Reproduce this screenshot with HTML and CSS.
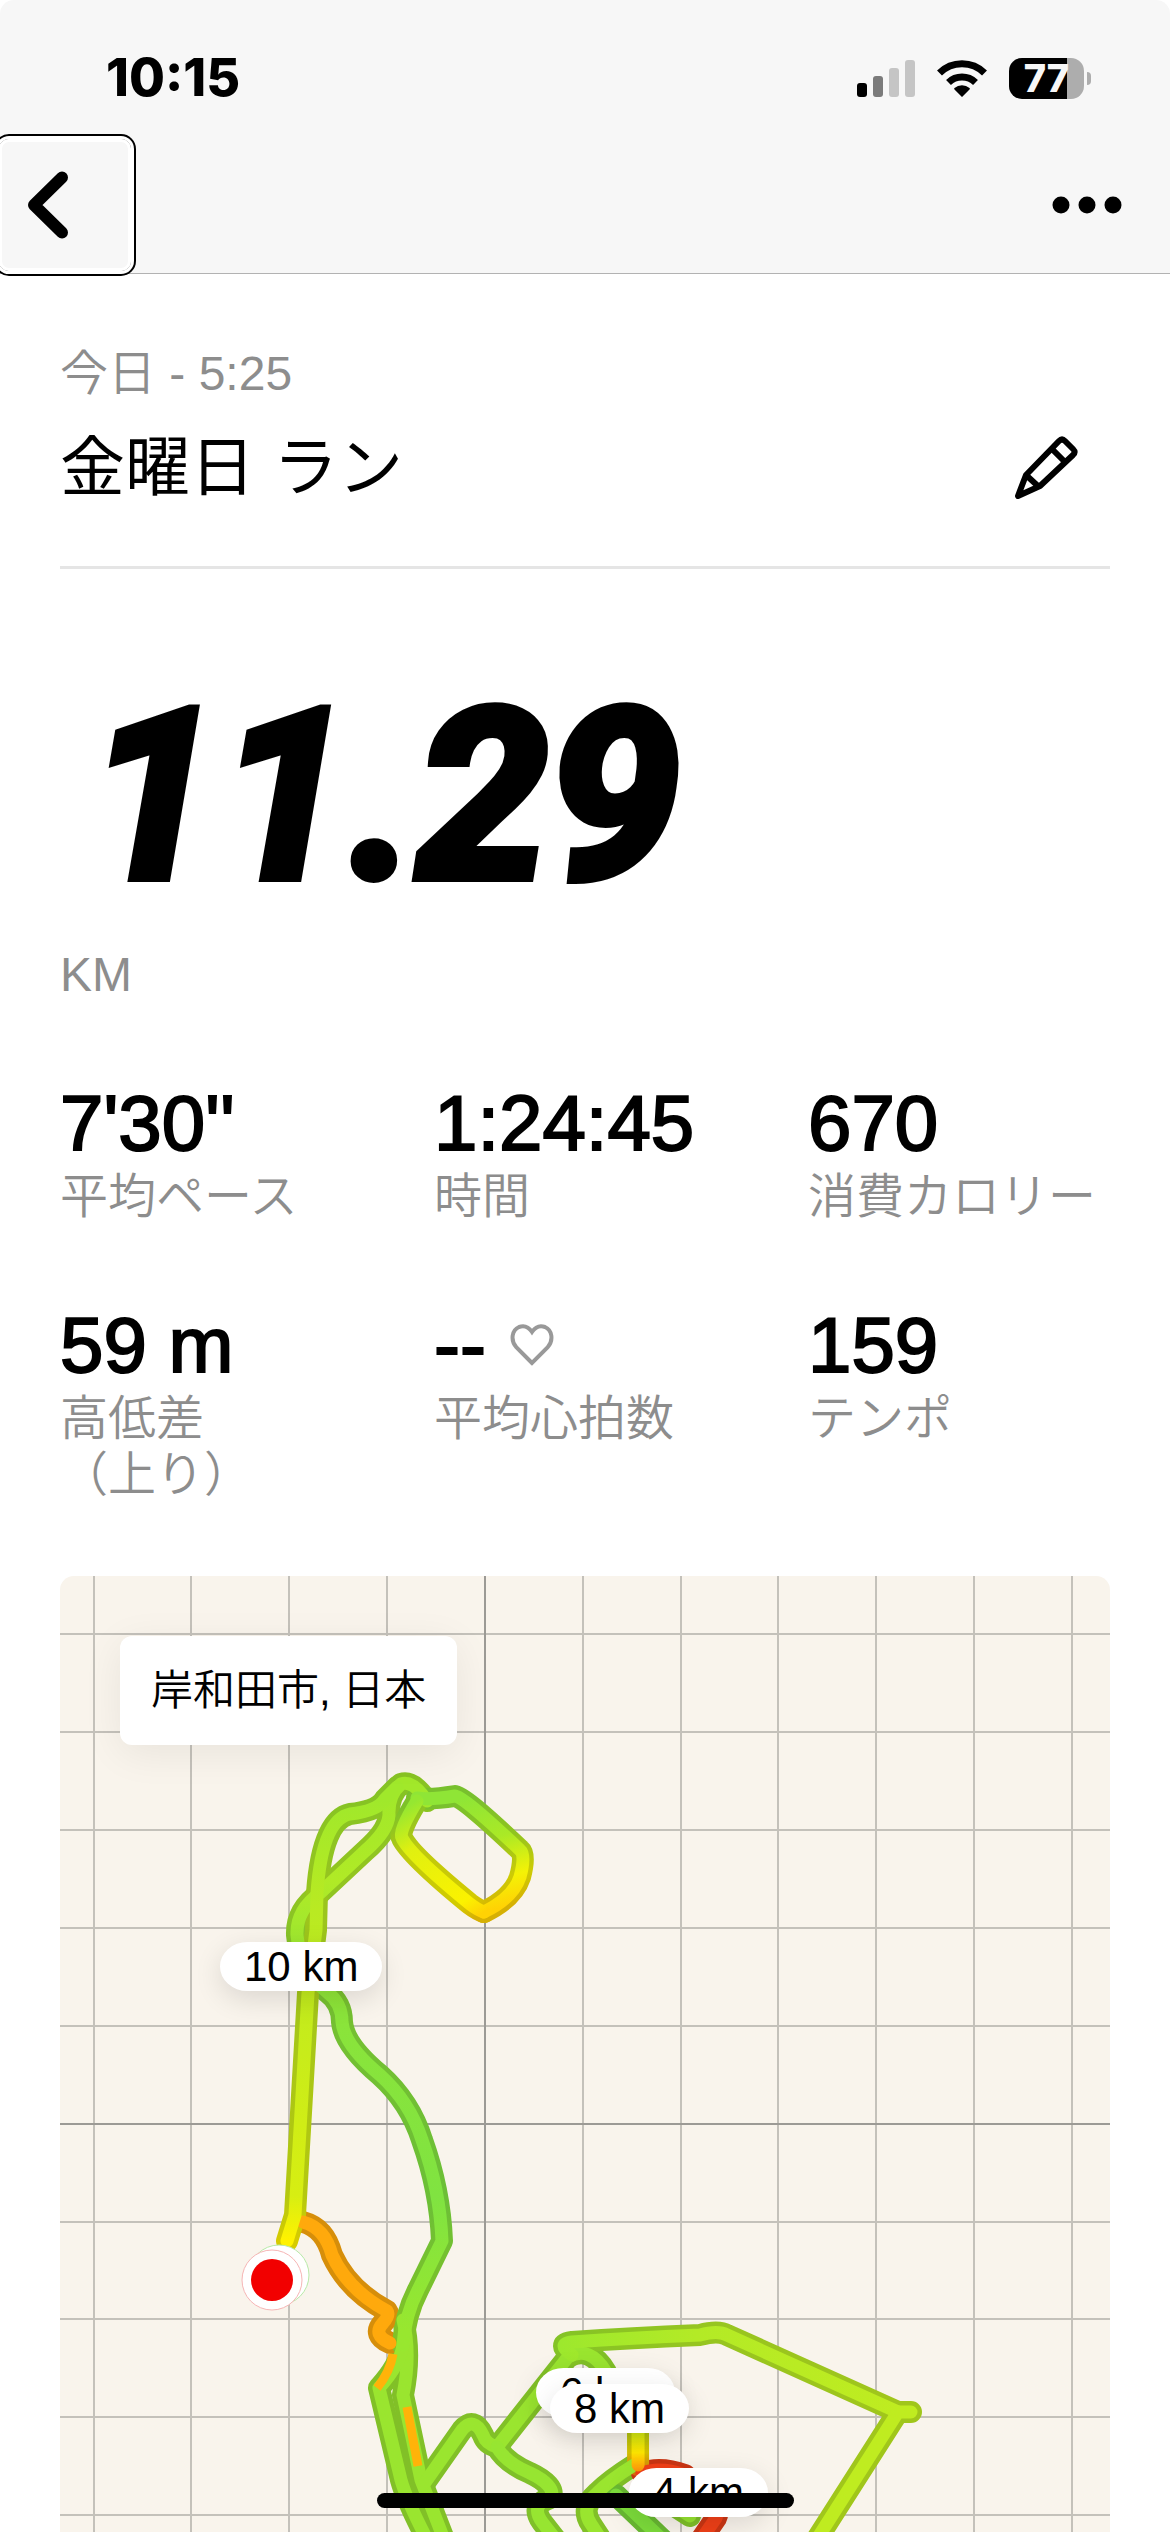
FILE: index.html
```html
<!DOCTYPE html>
<html lang="ja">
<head>
<meta charset="utf-8">
<meta name="viewport" content="width=device-width, initial-scale=1">
<title>金曜日 ラン</title>
<link rel="stylesheet" href="styles.css">
</head>
<body>
<header class="header">
  <div class="status">
    <span class="clock">10:15</span>
    <div class="status-icons">
      <svg class="signal" viewBox="0 0 58 37" aria-hidden="true">
        <rect x="0" y="23" width="10" height="14" rx="3"/>
        <rect x="16" y="16" width="10" height="21" rx="3" fill="#7b7b7b"/>
        <rect x="32" y="8" width="10" height="29" rx="3" fill="#c5c5c5"/>
        <rect x="48" y="0" width="10" height="37" rx="3" fill="#c5c5c5"/>
      </svg>
      <svg class="wifi" viewBox="0 0 50 37" aria-hidden="true">
        <path d="M25 37 17.500 29.500a1 1 0 0 1 0-1.500a11.500 11.500 0 0 1 15 0a1 1 0 0 1 0 1.500Z"/>
        <path d="M11.500 22.500a19.500 19.500 0 0 1 27 0" fill="none" stroke="#000" stroke-width="7"/>
        <path d="M2.500 13a32 32 0 0 1 45 0" fill="none" stroke="#000" stroke-width="7"/>
      </svg>
      <div class="battery"><span class="battery-level">77</span></div>
    </div>
  </div>
  <nav class="nav">
    <button class="back" type="button" aria-label="戻る">
      <svg class="chevron" viewBox="0 0 40 68" aria-hidden="true"><path d="M34 6.500 6 34l28 27.500" fill="none" stroke="#000" stroke-width="12" stroke-linecap="round" stroke-linejoin="round"/></svg>
    </button>
    <button class="more" type="button" aria-label="その他">
      <svg class="dots" viewBox="0 0 70 18" aria-hidden="true"><circle cx="9" cy="9" r="8.500"/><circle cx="35" cy="9" r="8.500"/><circle cx="61" cy="9" r="8.500"/></svg>
    </button>
  </nav>
</header>
<main class="main">
  <section class="heading">
    <div>
      <p class="label">今日 - 5:25</p>
      <h1 class="title">金曜日 ラン</h1>
    </div>
    <button class="edit" type="button" aria-label="編集">
      <svg class="pencil" viewBox="0 0 64 64" aria-hidden="true" fill="none" stroke="#000" stroke-width="6" stroke-linejoin="round"><path d="M4 60 12 39 45 5q3-3 6 0l8 8q3 3 0 6L26 50Z"/><path d="M38 13 51 26M12 39l13 12"/></svg>
    </button>
  </section>
  <section class="distance">
    <p class="distance-value">11.29</p>
    <p class="label">KM</p>
  </section>
  <dl class="stats">
    <div class="stat"><dt class="label">平均ペース</dt><dd class="value">7'30''</dd></div>
    <div class="stat"><dt class="label">時間</dt><dd class="value">1:24:45</dd></div>
    <div class="stat"><dt class="label">消費カロリー</dt><dd class="value">670</dd></div>
    <div class="stat"><dt class="label">高低差<br>（上り）</dt><dd class="value">59 m</dd></div>
    <div class="stat"><dt class="label">平均心拍数</dt><dd class="value">--<svg class="heart" viewBox="0 0 44 42" aria-hidden="true"><path d="M22 39 6.500 23.500C0 16 2 6 9 3C14.500 1 19 3.500 22 8C25 3.500 29.500 1 35 3C42 6 44 16 37.500 23.500Z" fill="none" stroke="#999" stroke-width="4"/></svg></dd></div>
    <div class="stat"><dt class="label">テンポ</dt><dd class="value">159</dd></div>
  </dl>
  <section class="map" aria-label="ルート">
    <svg class="map-canvas" viewBox="60 1576 1050 956" preserveAspectRatio="xMidYMin slice" aria-hidden="true">
      <defs>
        <linearGradient id="west" gradientUnits="userSpaceOnUse" x1="0" y1="1800" x2="0" y2="2240"><stop offset="0" stop-color="#a0e82b"/><stop offset=".25" stop-color="#b9ea22"/><stop offset=".9" stop-color="#d7ee12"/><stop offset="1" stop-color="#fff200"/></linearGradient>
        <linearGradient id="loop" gradientUnits="userSpaceOnUse" x1="455" y1="1800" x2="484" y2="1912"><stop offset="0" stop-color="#8fe536"/><stop offset=".4" stop-color="#aae926"/><stop offset=".75" stop-color="#f4f206"/><stop offset="1" stop-color="#ffd204"/></linearGradient>
        <linearGradient id="inner" gradientUnits="userSpaceOnUse" x1="417" y1="1800" x2="484" y2="1912"><stop offset="0" stop-color="#95e731"/><stop offset=".3" stop-color="#e0f010"/><stop offset=".85" stop-color="#fbf200"/><stop offset="1" stop-color="#ffd204"/></linearGradient>
        <linearGradient id="east" gradientUnits="userSpaceOnUse" x1="0" y1="1800" x2="0" y2="2330"><stop offset="0" stop-color="#a2e82a"/><stop offset=".15" stop-color="#b0ea26"/><stop offset=".4" stop-color="#8be43a"/><stop offset=".75" stop-color="#80e341"/><stop offset="1" stop-color="#98e72f"/></linearGradient>
        <linearGradient id="ridge" gradientUnits="userSpaceOnUse" x1="560" y1="0" x2="900" y2="0"><stop offset="0" stop-color="#9de82d"/><stop offset=".4" stop-color="#b3ea26"/><stop offset="1" stop-color="#bfec20"/></linearGradient>
        <linearGradient id="heat" gradientUnits="userSpaceOnUse" x1="0" y1="2425" x2="0" y2="2480"><stop offset="0" stop-color="#c3ea1a"/><stop offset=".5" stop-color="#ffe800"/><stop offset="1" stop-color="#ff6a12"/></linearGradient>
        <g id="route">
          <path stroke="#9ae52f" d="M403 2320C408 2340 409 2365 403 2395L421 2480 452 2560"/>
          <path stroke="#9ae52f" d="M403 2345Q400 2365 379 2388L401 2480Q408 2505 438 2560"/>
          <path stroke="#9ae52f" d="M424 2484 462 2430Q474 2416 483 2435Q486 2444 497 2447L568 2357Q590 2345 606 2372"/>
          <path stroke="#97e531" d="M497 2447Q505 2462 530 2473C545 2480 556 2490 550 2498Q530 2505 542 2522L560 2545"/>
          <path stroke="#9ae52f" d="M634 2465Q610 2480 597 2493Q580 2508 591 2524L608 2550"/>
          <path stroke="#7cdb3b" d="M616 2495 668 2545"/>
          <path stroke="#97e531" d="M650 2490 690 2516"/>
          <path stroke="#f04018" d="M642 2473Q660 2466 685 2475L710 2500Q720 2510 716 2518L694 2550"/>
          <path stroke="url(#heat)" d="M638 2425 638.100 2465"/>
          <path stroke="url(#ridge)" d="M572 2355Q556 2344 572 2342Q630 2338 700 2335Q718 2330 727 2335L898 2412"/>
          <path stroke="#bfec20" d="M898 2412H911M898 2412 810 2550"/>
          <path stroke="#ffa90c" d="M303 2222Q325 2228 332 2255Q348 2290 387 2311Q390 2315 383 2323Q372 2335 390 2343"/>
          <path stroke="url(#east)" d="M427 1801Q413 1780 401 1784Q388 1795 389 1815Q388 1831 365 1851L320 1893Q296 1910 297 1935Q300 1970 327 1992Q342 2003 342 2022Q344 2045 380 2075Q410 2102 422 2140Q440 2190 442 2241L418 2290Q405 2315 403 2345"/>
          <path stroke="url(#west)" d="M287 2241 295 2215 308 1993 316 1930 317 1893Q322 1820 350 1814Q378 1811 385 1799L397 1787"/>
          <path stroke="url(#loop)" d="M417 1798Q430 1800 455 1796Q463 1796 520 1850Q526 1855 520 1877Q513 1898 484 1912"/>
          <path stroke="url(#inner)" d="M417 1801Q398 1832 402 1838Q410 1855 470 1904Q478 1910 484 1912"/>
        </g>
      </defs>
      <g class="grid">
        <path d="M94 1576V2532M191 1576V2532M289 1576V2532M387 1576V2532M583 1576V2532M681 1576V2532M778 1576V2532M876 1576V2532M974 1576V2532M1072 1576V2532"/>
        <path d="M60 1634H1110M60 1732H1110M60 1830H1110M60 1928H1110M60 2026H1110M60 2222H1110M60 2319H1110M60 2417H1110M60 2515H1110"/>
        <path class="grid-major" d="M485 1576V2532M60 2124H1110"/>
      </g>
      <use href="#route" class="route route-casing"/>
      <use href="#route" class="route route-core"/>
      <g fill="none" stroke="#ffb309" stroke-width="9">
        <path d="M393 2354Q390 2372 377 2388M407 2407 418 2466"/>
      </g>
      <circle cx="279" cy="2275" r="30" fill="#fff" stroke="#b8eaa8"/>
      <circle cx="272" cy="2280" r="30" fill="#fff" stroke="#f6b5b5"/>
      <circle cx="272" cy="2280" r="21" fill="#f20000"/>
    </svg>
    <p class="place">岸和田市, 日本</p>
    <span class="pin pin-10">10 km</span>
    <span class="pin pin-6">6 km</span>
    <span class="pin pin-8">8 km</span>
    <span class="pin pin-4">4 km</span>
  </section>
</main>
<div class="home-indicator"></div>
</body>
</html>
```
FILE: styles.css
```css
* { box-sizing: border-box; }

body {
  margin: 0;
  min-height: 100vh;
  display: flex;
  flex-direction: column;
  background: #fff;
  color: #000;
  font-family: "Liberation Sans", "Noto Sans CJK JP", sans-serif;
}

p, h1, dl, dd { margin: 0; }

button {
  border: 0;
  padding: 0;
  background: none;
  color: inherit;
  cursor: pointer;
}

svg { display: block; }

.header {
  background: #f7f7f7;
  border-bottom: 1px solid #b2b2b2;
  border-radius: 14px 14px 0 0;
}

.status {
  display: flex;
  align-items: center;
  justify-content: space-between;
  height: 137px;
  padding: 19px 79px 0 106px;
}

.clock {
  font: 800 52px/60px Inter, sans-serif;
}

.status-icons { display: flex; align-items: center; gap: 22px; }
.signal { width: 58px; height: 37px; }
.wifi { width: 50px; height: 37px; }

.battery {
  position: relative;
  width: 75px;
  height: 41px;
  margin-right: 7px;
  border-radius: 13px;
  background: linear-gradient(to right, #000 77%, #adadad 77%);
}

.battery::after {
  content: "";
  position: absolute;
  left: 78px;
  top: 14px;
  width: 4px;
  height: 13px;
  border-radius: 0 4px 4px 0;
  background: #adadad;
}

.battery-level {
  display: block;
  text-align: center;
  color: #f7f7f7;
  font: 800 38px/41px Inter, sans-serif;
}

.nav {
  display: flex;
  align-items: center;
  justify-content: space-between;
  height: 136px;
  padding-right: 48px;
}

.back {
  position: relative;
  display: flex;
  align-items: center;
  width: 132px;
  height: 132px;
  padding-left: 29px;
  margin-left: -1px;
  border-radius: 10px;
  box-shadow: inset 0 0 0 3px #fff, 0 0 0 3px #fff, 0 0 0 5px #000;
}

.chevron { width: 40px; height: 68px; }
.more { height: 80px; }
.dots { width: 70px; height: 18px; }

.main {
  flex: 1;
  display: flex;
  flex-direction: column;
  padding: 0 60px;
}

.heading {
  display: flex;
  justify-content: space-between;
  align-items: flex-end;
  padding: 72px 32px 50px 0;
  border-bottom: 3px solid #e5e5e5;
}

.label {
  color: #8d8d8d;
  font-size: 48px;
  font-weight: 350;
  line-height: 56px;
}

.title {
  margin-top: 18px;
  font-size: 65px;
  font-weight: 400;
  line-height: 96px;
}

.edit { padding-bottom: 16px; }
.pencil { width: 64px; height: 64px; }

.distance { padding-top: 102px; }

.distance-value {
  padding-left: 28px;
  font-family: Roboto, sans-serif;
  font-size: 236px;
  font-weight: 700;
  font-style: italic;
  line-height: 252px;
  -webkit-text-stroke: 10px #000;
}

.distance .label { margin-top: 24px; }

.stats {
  display: grid;
  grid-template-columns: repeat(3, 1fr);
  gap: 80px 24px;
  margin: 80px -48px 73px 0;
}

.stat {
  display: flex;
  flex-direction: column-reverse;
  justify-content: flex-end;
  gap: 6px;
}

.value {
  display: flex;
  align-items: center;
  gap: 24px;
  font-size: 78px;
  line-height: 80px;
  -webkit-text-stroke: 2px #000;
}

.heart { width: 44px; height: 42px; }

.map {
  position: relative;
  flex: 1;
  min-height: 600px;
  overflow: hidden;
  border-radius: 14px 14px 0 0;
  background: #f9f4ec;
}

.map-canvas {
  position: absolute;
  inset: 0;
  width: 100%;
  height: 100%;
}

.grid { fill: none; stroke: #c4c1ba; stroke-width: 2; }
.grid-major { stroke: #9c9a95; }
.route { fill: none; stroke-linecap: round; stroke-linejoin: round; }
.route-casing { stroke-width: 22px; filter: brightness(.84); }
.route-core { stroke-width: 13px; }

.place {
  position: absolute;
  left: 60px;
  top: 60px;
  padding: 24px 31px;
  border-radius: 12px;
  background: #fff;
  box-shadow: 0 8px 40px rgba(0, 0, 0, .07);
  font-size: 42px;
  font-weight: 350;
  line-height: 61px;
}

.pin {
  position: absolute;
  padding: 0 24px;
  border-radius: 28px / 25px;
  background: #fff;
  box-shadow: 0 8px 28px rgba(0, 0, 0, .12);
  font-size: 42px;
  line-height: 49px;
  white-space: nowrap;
}

.pin-10 { left: 160px; top: 366px; }
.pin-6 { left: 476px; top: 792px; }
.pin-8 { left: 490px; top: 808px; }
.pin-4 { left: 569px; top: 892px; }

.home-indicator {
  position: fixed;
  left: 50%;
  bottom: 24px;
  width: 417px;
  height: 15px;
  margin-left: -208px;
  border-radius: 8px;
  background: #000;
}
```
